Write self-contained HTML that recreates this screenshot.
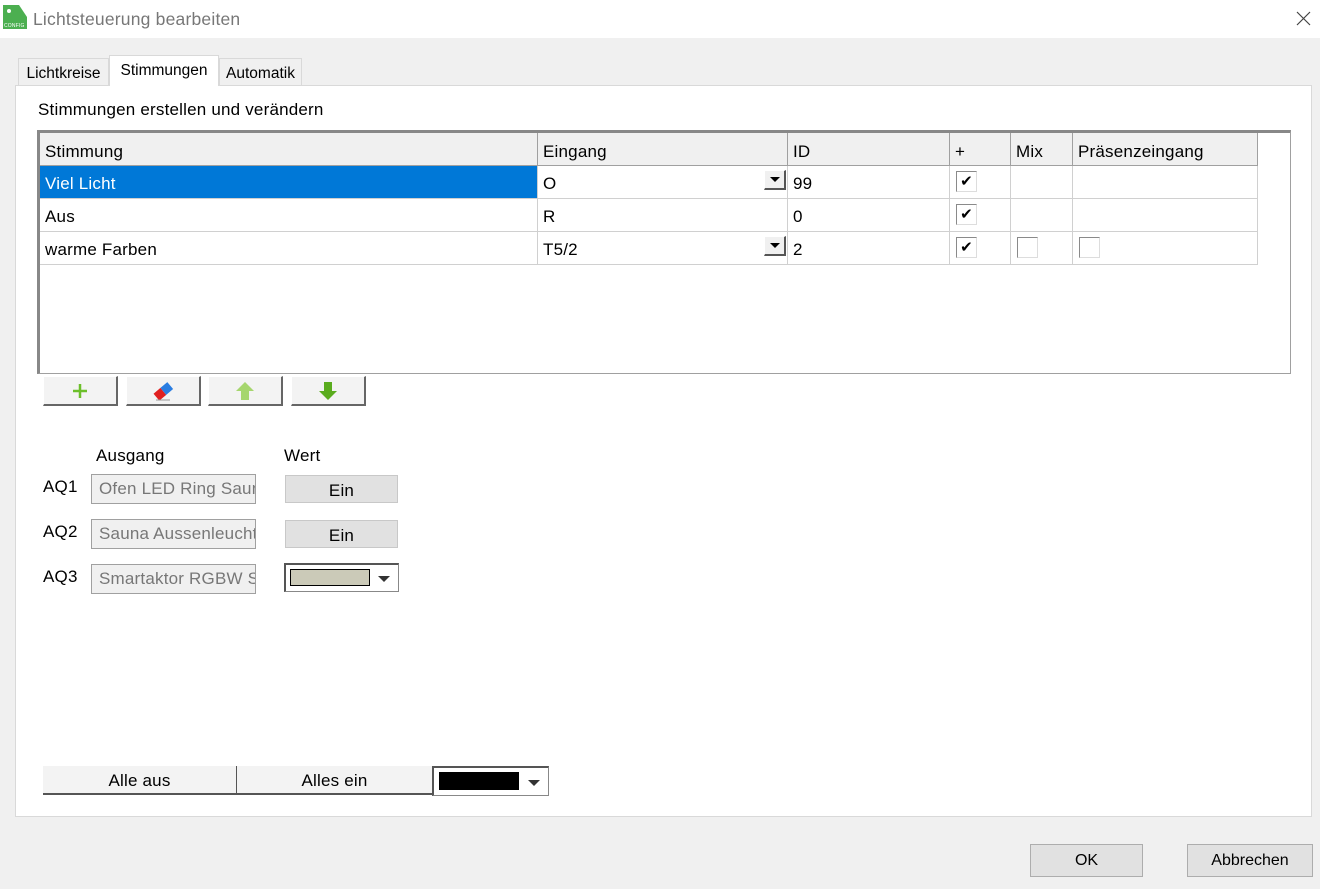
<!DOCTYPE html>
<html><head><meta charset="utf-8"><style>
*{margin:0;padding:0;box-sizing:border-box}
body{width:1320px;height:889px;background:#f0f0f0;font-family:"Liberation Sans",sans-serif;font-size:17px;letter-spacing:0.2px;color:#000;position:relative;overflow:hidden}
.a{position:absolute}
.title{left:0;top:0;width:1320px;height:38px;background:#fff}
.tab{top:58px;height:28px;border:1px solid #d9d9d9;border-bottom:none;background:#f0f0f0;font-size:15.5px;letter-spacing:0;padding:5px 0 0 0;text-align:center}
.panel{left:15px;top:85px;width:1297px;height:732px;background:#fff;border:1px solid #d9d9d9}
.cell{position:absolute;height:33px;border-right:1px solid #d0d0d0;border-bottom:1px solid #d0d0d0;padding:8px 0 0 5px;white-space:nowrap}
.hd{background:#f0f0f0;border-right:1px solid #a0a0a0;border-bottom:1px solid #a0a0a0;padding-top:9px}
.cb{position:absolute;width:21px;height:21px;border:1px solid #8a8a8a;border-right-color:#ddd;border-bottom-color:#ddd;background:#fff;font-size:15px;line-height:19px;text-align:center;padding:0}
.dd{position:absolute;width:22px;height:20px;background:#f0f0f0;border-right:2px solid #555;border-bottom:2px solid #555;border-top:1px solid #fff;border-left:1px solid #fff}
.dd:after{content:"";position:absolute;left:5px;top:6px;border-left:5px solid transparent;border-right:5px solid transparent;border-top:5px solid #000}
.tb{position:absolute;top:376px;width:75px;height:30px;background:#f3f3f3;border-right:2px solid #666;border-bottom:2px solid #666;border-top:1px solid #fff;border-left:1px solid #fff}
.inp{position:absolute;left:91px;width:165px;height:30px;border:1px solid #a0a0a0;background:#f0f0f0;color:#777;padding:4px 0 0 7px;white-space:nowrap;overflow:hidden}
.ein{position:absolute;left:285px;width:113px;height:28px;background:#e1e1e1;border:1px solid #c8c8c8;text-align:center;padding-top:5px}
.btn{position:absolute;top:844px;height:33px;background:#e1e1e1;border:1px solid #adadad;text-align:center;padding-top:7px;font-size:16px;letter-spacing:0}
</style></head><body>
<div class="a title">
<svg class="a" style="left:3px;top:5px" width="24" height="24" viewBox="0 0 24 24"><path d="M0 0H16L24 12V24H0Z" fill="#4caf50"/><circle cx="6" cy="6" r="2" fill="#fff"/><text x="1" y="22" font-size="5" fill="#fff" font-family="Liberation Sans">CONFIG</text></svg>
<div class="a" style="left:33px;top:9px;font-size:17.5px;color:#777;letter-spacing:0.2px">Lichtsteuerung bearbeiten</div>
<svg class="a" style="left:1296px;top:11px" width="15" height="15"><path d="M1 1L14 14M14 1L1 14" stroke="#444" stroke-width="1.2"/></svg>
</div>
<div class="a tab" style="left:18px;width:91px;padding-top:6px">Lichtkreise</div>
<div class="a tab" style="left:219px;width:83px;padding-top:6px">Automatik</div>
<div class="a panel"></div>
<div class="a tab" style="left:109px;top:55px;width:110px;height:31px;background:#fff;z-index:2;padding-top:6px">Stimmungen</div>
<div class="a" style="left:38px;top:100px">Stimmungen erstellen und verändern</div>
<div class="a" style="left:37px;top:130px;width:1254px;height:244px;border:1px solid #a0a0a0;border-top:3px solid #888;border-left:3px solid #888;background:#fff">
<div class="cell hd" style="left:0;top:0;width:498px">Stimmung</div>
<div class="cell hd" style="left:498px;top:0;width:250px">Eingang</div>
<div class="cell hd" style="left:748px;top:0;width:162px">ID</div>
<div class="cell hd" style="left:910px;top:0;width:61px">+</div>
<div class="cell hd" style="left:971px;top:0;width:62px">Mix</div>
<div class="cell hd" style="left:1033px;top:0;width:185px">Präsenzeingang</div>

<div class="cell" style="left:0;top:33px;width:498px;background:#0078d7;color:#fff">Viel Licht</div>
<div class="cell" style="left:498px;top:33px;width:250px">O</div>
<div class="dd" style="left:724px;top:37px"></div>
<div class="cell" style="left:748px;top:33px;width:162px">99</div>
<div class="cell" style="left:910px;top:33px;width:61px"></div>
<div class="cb" style="left:916px;top:38px">✔</div>
<div class="cell" style="left:971px;top:33px;width:62px"></div>
<div class="cell" style="left:1033px;top:33px;width:185px"></div>

<div class="cell" style="left:0;top:66px;width:498px">Aus</div>
<div class="cell" style="left:498px;top:66px;width:250px">R</div>
<div class="cell" style="left:748px;top:66px;width:162px">0</div>
<div class="cell" style="left:910px;top:66px;width:61px"></div>
<div class="cb" style="left:916px;top:71px">✔</div>
<div class="cell" style="left:971px;top:66px;width:62px"></div>
<div class="cell" style="left:1033px;top:66px;width:185px"></div>

<div class="cell" style="left:0;top:99px;width:498px">warme Farben</div>
<div class="cell" style="left:498px;top:99px;width:250px">T5/2</div>
<div class="dd" style="left:724px;top:103px"></div>
<div class="cell" style="left:748px;top:99px;width:162px">2</div>
<div class="cell" style="left:910px;top:99px;width:61px"></div>
<div class="cb" style="left:916px;top:104px">✔</div>
<div class="cell" style="left:971px;top:99px;width:62px"></div>
<div class="cb" style="left:977px;top:104px"></div>
<div class="cell" style="left:1033px;top:99px;width:185px"></div>
<div class="cb" style="left:1039px;top:104px"></div>
</div>

<div class="tb" style="left:43px"><svg class="a" style="left:28px;top:6px" width="16" height="16"><path d="M8 1V15M1 8H15" stroke="#6cbf2a" stroke-width="2.5"/></svg></div>
<div class="tb" style="left:126px"><svg class="a" style="left:24px;top:4px" width="24" height="20"><g transform="rotate(-40 12 10)"><rect x="3" y="6" width="9" height="9" fill="#e02020"/><rect x="12" y="6" width="9" height="9" fill="#2a7de1"/></g><path d="M5 19H19" stroke="#999"/></svg></div>
<div class="tb" style="left:208px"><svg class="a" style="left:26px;top:4px" width="20" height="20"><path d="M10 1L19 10H14V19H6V10H1Z" fill="#a6d66e"/></svg></div>
<div class="tb" style="left:291px"><svg class="a" style="left:26px;top:4px" width="20" height="20"><path d="M10 19L19 10H14V1H6V10H1Z" fill="#5aac1e"/></svg></div>

<div class="a" style="left:96px;top:446px">Ausgang</div>
<div class="a" style="left:284px;top:446px">Wert</div>
<div class="a" style="left:43px;top:477px">AQ1</div>
<div class="a" style="left:43px;top:522px">AQ2</div>
<div class="a" style="left:43px;top:567px">AQ3</div>
<div class="inp" style="top:474px">Ofen LED Ring Sauna</div>
<div class="inp" style="top:519px">Sauna Aussenleuchte</div>
<div class="inp" style="top:564px">Smartaktor RGBW S</div>
<div class="ein" style="top:475px">Ein</div>
<div class="ein" style="top:520px">Ein</div>
<div class="a" style="left:284px;top:563px;width:115px;height:29px;border:1px solid #888;border-left:2px solid #555;border-top:2px solid #555;background:#fff">
<div class="a" style="left:4px;top:4px;width:80px;height:17px;background:#cbcab8;border:1px solid #000"></div>
<div class="a" style="left:92px;top:11px;border-left:6px solid transparent;border-right:6px solid transparent;border-top:6px solid #333"></div>
</div>

<div class="a" style="left:43px;top:766px;width:195px;height:29px;background:#f3f3f3;border-bottom:2px solid #555;border-right:2px solid #555;text-align:center;padding-top:5px">Alle aus</div>
<div class="a" style="left:237px;top:766px;width:197px;height:29px;background:#f3f3f3;border-bottom:2px solid #555;border-right:2px solid #555;text-align:center;padding-top:5px">Alles ein</div>
<div class="a" style="left:432px;top:766px;width:117px;height:30px;border:1px solid #888;border-left:2px solid #555;border-top:2px solid #555;background:#fff">
<div class="a" style="left:5px;top:4px;width:80px;height:18px;background:#000"></div>
<div class="a" style="left:94px;top:12px;border-left:6px solid transparent;border-right:6px solid transparent;border-top:6px solid #333"></div>
</div>

<div class="btn" style="left:1030px;width:113px">OK</div>
<div class="btn" style="left:1187px;width:126px">Abbrechen</div>
</body></html>
